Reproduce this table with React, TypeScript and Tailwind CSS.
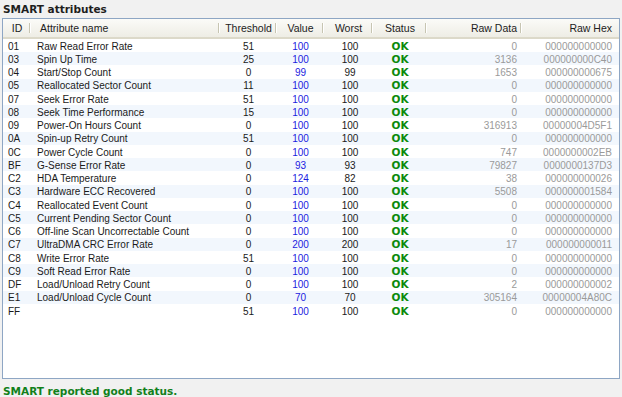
const rows: [string, string, string, string, string, string, string][] = [
  ["01", "Raw Read Error Rate", "51", "100", "100", "0", "000000000000"],
  ["03", "Spin Up Time", "25", "100", "100", "3136", "000000000C40"],
  ["04", "Start/Stop Count", "0", "99", "99", "1653", "000000000675"],
  ["05", "Reallocated Sector Count", "11", "100", "100", "0", "000000000000"],
  ["07", "Seek Error Rate", "51", "100", "100", "0", "000000000000"],
  ["08", "Seek Time Performance", "15", "100", "100", "0", "000000000000"],
  ["09", "Power-On Hours Count", "0", "100", "100", "316913", "00000004D5F1"],
  ["0A", "Spin-up Retry Count", "51", "100", "100", "0", "000000000000"],
  ["0C", "Power Cycle Count", "0", "100", "100", "747", "0000000002EB"],
  ["BF", "G-Sense Error Rate", "0", "93", "93", "79827", "0000000137D3"],
  ["C2", "HDA Temperature", "0", "124", "82", "38", "000000000026"],
  ["C3", "Hardware ECC Recovered", "0", "100", "100", "5508", "000000001584"],
  ["C4", "Reallocated Event Count", "0", "100", "100", "0", "000000000000"],
  ["C5", "Current Pending Sector Count", "0", "100", "100", "0", "000000000000"],
  ["C6", "Off-line Scan Uncorrectable Count", "0", "100", "100", "0", "000000000000"],
  ["C7", "UltraDMA CRC Error Rate", "0", "200", "200", "17", "000000000011"],
  ["C8", "Write Error Rate", "51", "100", "100", "0", "000000000000"],
  ["C9", "Soft Read Error Rate", "0", "100", "100", "0", "000000000000"],
  ["DF", "Load/Unload Retry Count", "0", "100", "100", "2", "000000000002"],
  ["E1", "Load/Unload Cycle Count", "0", "70", "70", "305164", "00000004A80C"],
  ["FF", "", "51", "100", "100", "0", "000000000000"],
];

const Sep = () => <span className="absolute right-0 top-[3px] bottom-[4px] w-[2px] border-l border-[#c7c5b2] border-r border-r-white" />;

export default function App() {
  return (
    <div className="w-[622px] h-[397px] bg-[#f1f1f1] flex flex-col overflow-hidden font-['Liberation_Sans',Arial,sans-serif] text-[10px] text-[#1a1a1a]">
      <div className="h-[18px] pl-[3px] pt-[2px] font-['DejaVu_Sans',Verdana,sans-serif] font-bold text-[10.5px] text-[#1e1e1e] leading-[14px]">
        SMART attributes
      </div>
      <div className="ml-[2px] w-[618px] h-[363px] bg-white border border-[#8ea6c4] flex flex-col">
        <div className="h-[20px] flex items-center bg-gradient-to-b from-[#fbfbf8] to-[#eeede5] border-b-2 border-[#dcd9c9] text-[#222] text-[10.5px] pt-[1px]">
          <div className="relative w-[28px] h-full flex items-center justify-center">ID<Sep /></div>
          <div className="relative w-[189px] h-full flex items-center pl-[9px]">Attribute name<Sep /></div>
          <div className="relative w-[57px] h-full flex items-center justify-center">Threshold<Sep /></div>
          <div className="relative w-[47px] h-full flex items-center justify-center">Value<Sep /></div>
          <div className="relative w-[49px] h-full flex items-center justify-center">Worst<Sep /></div>
          <div className="relative w-[54px] h-full flex items-center justify-center">Status<Sep /></div>
          <div className="relative w-[95px] h-full flex items-center justify-end pr-[5px]">Raw Data<Sep /></div>
          <div className="w-[95px] h-full flex items-center justify-end pr-[5px]">Raw Hex</div>
        </div>
        {rows.map((r, i) => (
          <div key={r[0]} className={`h-[13.25px] flex items-center leading-[13px] pt-[1px] ${i % 2 === 1 ? "bg-[#f2f7fd]" : ""}`}>
            <div className="w-[28px] pl-[5px]">{r[0]}</div>
            <div className="w-[189px] pl-[6px] whitespace-nowrap">{r[1]}</div>
            <div className="w-[57px] text-center">{r[2]}</div>
            <div className="w-[47px] text-center text-[#1c1ce0]">{r[3]}</div>
            <div className="w-[49px] text-center pl-[3px]">{r[4]}</div>
            <div className="w-[54px] text-center font-['DejaVu_Sans',Verdana,sans-serif] font-bold text-[10.5px] text-[#0b8a0b]">OK</div>
            <div className="w-[95px] text-right pr-[5px] text-[#9a9a9a]">{r[5]}</div>
            <div className="w-[95px] text-right pr-[5px] text-[#9a9a9a]">{r[6]}</div>
          </div>
        ))}
      </div>
      <div className="pl-[3px] pt-[6px] font-['DejaVu_Sans',Verdana,sans-serif] font-bold text-[10.5px] text-[#11801a] leading-[12px]">
        SMART reported good status.
      </div>
    </div>
  );
}
